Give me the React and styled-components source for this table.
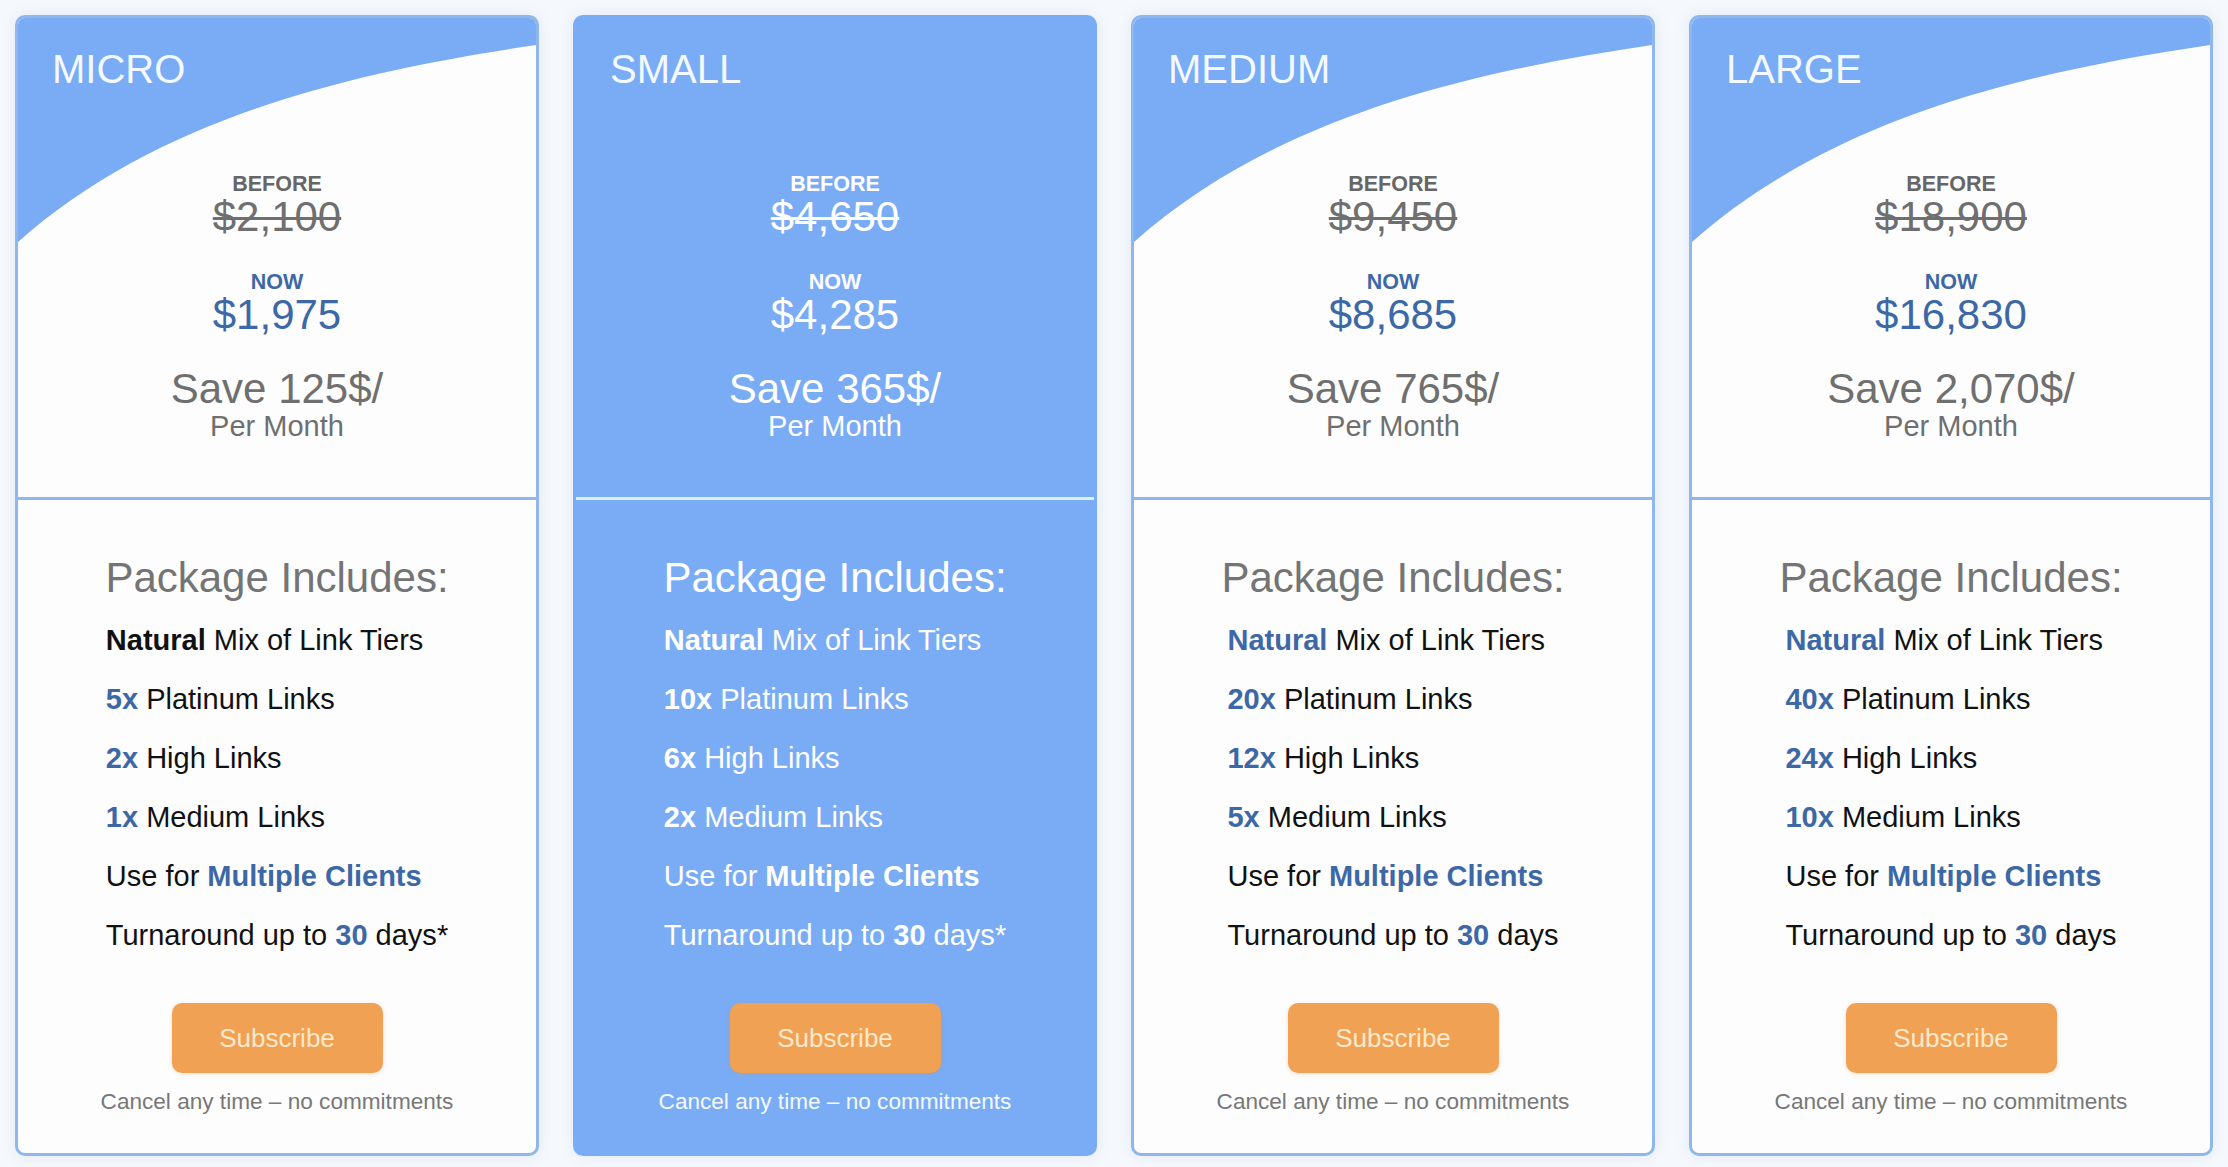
import React from "react";
import styled, { createGlobalStyle } from "styled-components";

const GlobalStyle = createGlobalStyle`
  body {
    margin: 0;
    background: #f5f8fc;
    font-family: "Liberation Sans", Arial, sans-serif;
  }
`;

const BLUE = "#79acf5";
const INK_BLUE = "#3d68a6";

const plans = [
  {
    name: "MICRO",
    before: "$2,100",
    now: "$1,975",
    save: "125",
    natural: "dark",
    qty: ["5x", "2x", "1x"],
    asterisk: true,
  },
  {
    name: "SMALL",
    before: "$4,650",
    now: "$4,285",
    save: "365",
    natural: "light",
    qty: ["10x", "6x", "2x"],
    asterisk: true,
    featured: true,
  },
  {
    name: "MEDIUM",
    before: "$9,450",
    now: "$8,685",
    save: "765",
    natural: "blue",
    qty: ["20x", "12x", "5x"],
    asterisk: false,
  },
  {
    name: "LARGE",
    before: "$18,900",
    now: "$16,830",
    save: "2,070",
    natural: "blue",
    qty: ["40x", "24x", "10x"],
    asterisk: false,
  },
];

const Page = styled.div`
  display: flex;
  gap: 34px;
  padding: 15px 15px 11px 15px;
`;

const Card = styled.div`
  width: 524px;
  box-sizing: border-box;
  border: 3px solid ${(p) => (p.$featured ? BLUE : "#8fb7ec")};
  border-radius: 10px;
  background: ${(p) => (p.$featured ? BLUE : "#fdfdfe")};
  box-shadow: 0 0 14px rgba(110, 150, 215, 0.14);
  overflow: hidden;
  display: flex;
  flex-direction: column;
  color: ${(p) => (p.$featured ? "#ffffff" : "#111")};
`;

const Header = styled.div`
  position: relative;
  height: 479px;
  box-sizing: border-box;
  padding-top: 28px;
  display: flex;
  flex-direction: column;
  align-items: center;
`;

const Wave = styled.svg`
  position: absolute;
  top: 0;
  left: 0;
  width: 518px;
  height: 260px;
  z-index: 0;
`;

const Title = styled.div`
  position: relative;
  z-index: 1;
  align-self: flex-start;
  padding-left: 34px;
  font-size: 40px;
  line-height: 46px;
  color: #f4f9ff;
`;

const Label = styled.div`
  position: relative;
  z-index: 1;
  margin-top: ${(p) => p.$gap}px;
  font-size: 21.5px;
  line-height: 24px;
  font-weight: 700;
  color: ${(p) => (p.$featured ? "#fff" : p.$tone)};
`;

const Price = styled.div`
  position: relative;
  z-index: 1;
  margin-top: 1px;
  font-size: 42px;
  line-height: 40px;
  color: ${(p) => (p.$featured ? "#fff" : p.$tone)};
  text-decoration: ${(p) => (p.$struck ? "line-through" : "none")};
  text-decoration-thickness: 3px;
`;

const Save = styled.div`
  margin-top: 32px;
  font-size: 42px;
  line-height: 44px;
  color: ${(p) => (p.$featured ? "#fff" : "#6f6f6f")};
`;

const PerMonth = styled.div`
  font-size: 29px;
  line-height: 30px;
  color: ${(p) => (p.$featured ? "#fff" : "#6f6f6f")};
`;

const Divider = styled.div`
  height: 3px;
  background: ${(p) => (p.$featured ? "#dcefff" : "#8fb7ec")};
`;

const Body = styled.div`
  padding: 54px 0 38px;
  display: flex;
  flex-direction: column;
  align-items: center;
`;

const IncludesTitle = styled.div`
  font-size: 42px;
  line-height: 48px;
  color: ${(p) => (p.$featured ? "#fff" : "#747474")};
`;

const List = styled.ul`
  list-style: none;
  margin: 9px 0 0;
  padding: 0;
`;

const Item = styled.li`
  font-size: 29px;
  line-height: 59px;
  white-space: nowrap;
`;

const toneColor = {
  dark: "#111",
  light: "#fff",
  blue: INK_BLUE,
};

const Strong = styled.b`
  font-weight: 700;
  color: ${(p) => toneColor[p.$tone]};
`;

const Button = styled.button`
  margin-top: 38px;
  width: 211px;
  height: 70px;
  border: none;
  border-radius: 10px;
  background: #f0a154;
  color: #fde9cb;
  font-family: inherit;
  font-size: 26px;
  box-shadow: 0 1px 4px rgba(230, 140, 60, 0.25);
  cursor: pointer;
`;

const Note = styled.div`
  margin-top: 16px;
  font-size: 22.6px;
  line-height: 26px;
  color: ${(p) => (p.$featured ? "#f4f9ff" : "#777")};
`;

const PlanCard = ({ plan }) => {
  const f = !!plan.featured;
  const hi = f ? "light" : "blue";
  return (
    <Card $featured={f}>
      <Header>
        {!f && (
          <Wave viewBox="0 0 518 260" preserveAspectRatio="none">
            <path d="M0 0 H518 V27 C330 55 140 100 0 224 Z" fill={BLUE} />
          </Wave>
        )}
        <Title>{plan.name}</Title>
        <Label $gap={80} $featured={f} $tone="#666">
          BEFORE
        </Label>
        <Price $struck $featured={f} $tone="#6f6f6f">
          {plan.before}
        </Price>
        <Label $gap={33} $featured={f} $tone={INK_BLUE}>
          NOW
        </Label>
        <Price $featured={f} $tone={INK_BLUE}>
          {plan.now}
        </Price>
        <Save $featured={f}>Save {plan.save}$/</Save>
        <PerMonth $featured={f}>Per Month</PerMonth>
      </Header>
      <Divider $featured={f} />
      <Body>
        <IncludesTitle $featured={f}>Package Includes:</IncludesTitle>
        <List>
          <Item>
            <Strong $tone={plan.natural}>Natural</Strong> Mix of Link Tiers
          </Item>
          <Item>
            <Strong $tone={hi}>{plan.qty[0]}</Strong> Platinum Links
          </Item>
          <Item>
            <Strong $tone={hi}>{plan.qty[1]}</Strong> High Links
          </Item>
          <Item>
            <Strong $tone={hi}>{plan.qty[2]}</Strong> Medium Links
          </Item>
          <Item>
            Use for <Strong $tone={hi}>Multiple Clients</Strong>
          </Item>
          <Item>
            Turnaround up to <Strong $tone={hi}>30</Strong> days
            {plan.asterisk ? "*" : ""}
          </Item>
        </List>
        <Button>Subscribe</Button>
        <Note $featured={f}>Cancel any time – no commitments</Note>
      </Body>
    </Card>
  );
};

const App = () => {
  return (
    <>
      <GlobalStyle />
      <Page>
        {plans.map((p) => (
          <PlanCard key={p.name} plan={p} />
        ))}
      </Page>
    </>
  );
};

export default App;
